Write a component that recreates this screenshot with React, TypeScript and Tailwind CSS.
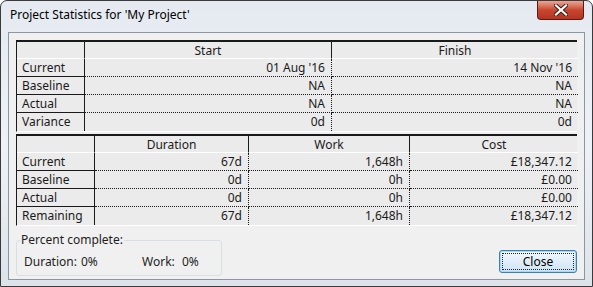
import React from 'react'

const font = { fontFamily: '"Noto Sans", "Open Sans", sans-serif' }

type Row = { label: string; values: string[] }

function StatTable({ cols, heads, rows }: { cols: string; heads: string[]; rows: Row[] }) {
  return (
    <div className={`grid ${cols} border-t-2 border-l border-[#1a1a1a] border-b border-b-white bg-[#ebebeb] text-[12px] text-[#1a1a1a]`}>
      <div className="h-[17px] border-r border-[#1a1a1a] border-b border-b-white" />
      {heads.map((h, i) => (
        <div
          key={h}
          className={`h-[17px] leading-[17px] text-center border-b border-b-white ${
            i < heads.length - 1 ? 'border-r border-[#1a1a1a]' : ''
          }`}
        >
          {h}
        </div>
      ))}
      {rows.map((r, ri) => {
        const last = ri === rows.length - 1
        return (
          <React.Fragment key={r.label}>
            <div
              className={`h-[18px] leading-[17px] pl-[5px] border-r border-[#1a1a1a] ${
                last ? '' : 'border-b border-b-[#1a1a1a]'
              }`}
            >
              {r.label}
            </div>
            {r.values.map((v, vi) => (
              <div
                key={vi}
                className={`h-[18px] leading-[17px] text-right pr-[6px] ${
                  vi < r.values.length - 1 ? 'border-r border-dotted border-r-[#1a1a1a]' : ''
                } ${last ? '' : 'border-b border-dotted border-b-[#1a1a1a]'}`}
              >
                {v}
              </div>
            ))}
          </React.Fragment>
        )
      })}
    </div>
  )
}

export default function App() {
  return (
    <div
      style={font}
      className="w-[593px] h-[287px] rounded-t-[7px] border border-[#3a3a3a] bg-gradient-to-b from-[#e4eaf0] via-[#eef2f6] to-[#dde3e9] flex flex-col overflow-hidden"
    >
      {/* Title bar */}
      <div className="h-[31px] flex items-start justify-between">
        <div className="pl-[9px] pt-[5px] text-[12px] text-black">Project Statistics for 'My Project'</div>
        <div className="mr-[8px] w-[47px] h-[19px] rounded-b-[4px] border border-[#5a1a14] border-t-0 bg-gradient-to-b from-[#e8a595] via-[#c8462f] to-[#b73222] flex items-center justify-center">
          <svg width="14" height="12" viewBox="0 0 14 12">
            <path
              d="M2 1.5 L12 10.5 M12 1.5 L2 10.5"
              stroke="#3a1a14"
              strokeWidth="4"
              strokeLinecap="square"
            />
            <path d="M2 1.5 L12 10.5 M12 1.5 L2 10.5" stroke="#ffffff" strokeWidth="2.2" strokeLinecap="square" />
          </svg>
        </div>
      </div>

      {/* Client area */}
      <div className="mx-[7px] mb-[6px] flex-1 border border-[#8a96a2] bg-[#f0f0f0] px-[7px] pt-[7px] flex flex-col">
        <StatTable
          cols="grid-cols-[68px_247px_246px]"
          heads={['Start', 'Finish']}
          rows={[
            { label: 'Current', values: ["01 Aug '16", "14 Nov '16"] },
            { label: 'Baseline', values: ['NA', 'NA'] },
            { label: 'Actual', values: ['NA', 'NA'] },
            { label: 'Variance', values: ['0d', '0d'] },
          ]}
        />
        <div className="h-[2px]" />
        <StatTable
          cols="grid-cols-[78px_154px_161px_168px]"
          heads={['Duration', 'Work', 'Cost']}
          rows={[
            { label: 'Current', values: ['67d', '1,648h', '£18,347.12'] },
            { label: 'Baseline', values: ['0d', '0h', '£0.00'] },
            { label: 'Actual', values: ['0d', '0h', '£0.00'] },
            { label: 'Remaining', values: ['67d', '1,648h', '£18,347.12'] },
          ]}
        />

        <div className="flex items-end justify-between mt-[8px]">
          <div className="relative w-[206px] h-[36px] mt-[6px] border border-[#d5dfe5] rounded-[3px]">
            <span className="absolute -top-[9px] left-[3px] bg-[#f0f0f0] px-[1px] text-[12px] leading-[16px] text-[#1e1e1e]">
              Percent complete:
            </span>
            <div className="flex pt-[13px] pl-[7px] text-[12px] leading-[16px] text-[#1e1e1e]">
              <span className="w-[57px]">Duration:</span>
              <span className="w-[61px]">0%</span>
              <span className="w-[40px]">Work:</span>
              <span>0%</span>
            </div>
          </div>
          <div className="mb-[3px] w-[78px] h-[23px] rounded-[3px] border border-[#3c7fb1] bg-gradient-to-b from-[#f2f8fc] via-[#e0eef9] to-[#cde4f4] shadow-[inset_0_0_0_1px_#a8d8f5] p-[2px]">
            <div className="w-full h-full border border-dotted border-[#222] flex items-center justify-center text-[12px] text-black">
              Close
            </div>
          </div>
        </div>
      </div>
    </div>
  )
}
